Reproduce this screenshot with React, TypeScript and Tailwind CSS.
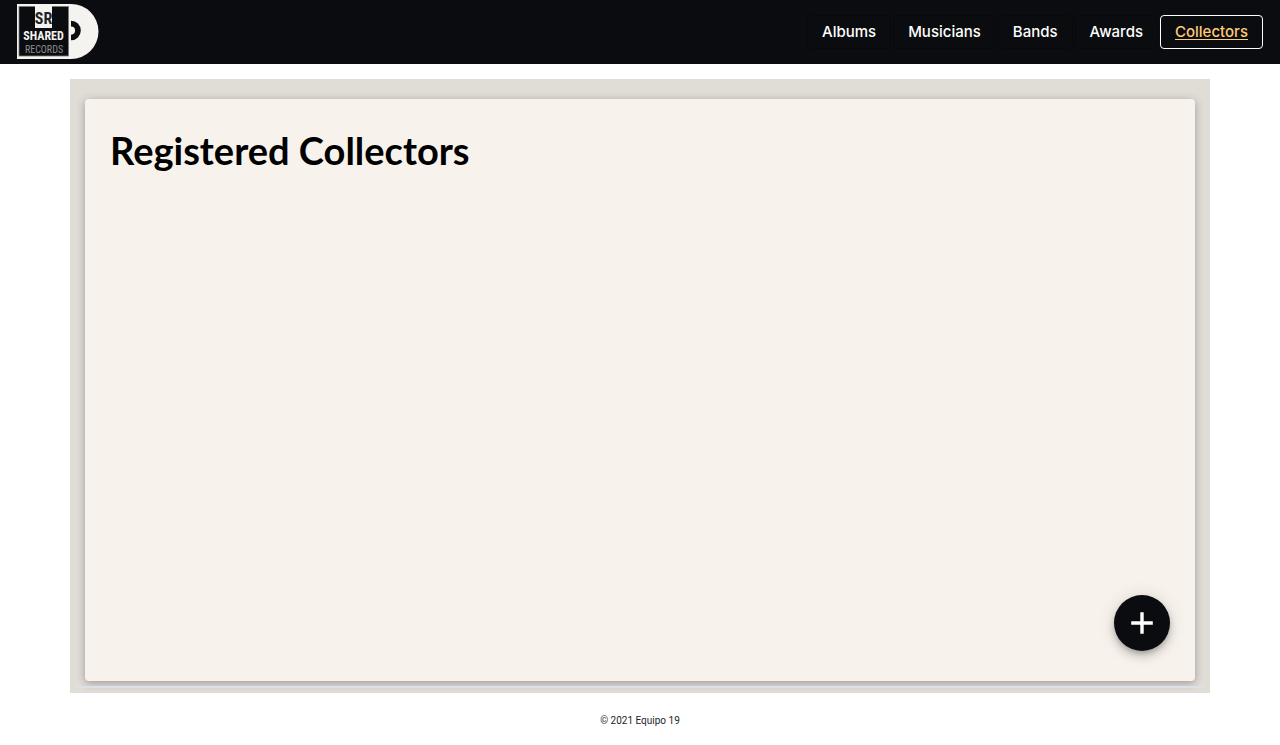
const links = [
  { label: "Albums", href: "#albums" },
  { label: "Musicians", href: "#musicians" },
  { label: "Bands", href: "#bands" },
  { label: "Awards", href: "#awards" },
  { label: "Collectors", href: "#collectors" },
];

function Logo() {
  return (
    <svg
      className="block"
      width="83"
      height="56"
      viewBox="0 0 83 56"
      role="img"
      aria-label="Shared Records"
      fontFamily="'Roboto Condensed', 'Liberation Sans Narrow', sans-serif"
      textAnchor="middle"
    >
      <path d="M1 0H55A27.5 27.5 0 0 1 55 55H1Z" fill="#f4f3ef" />
      <rect x="3" y="2.5" width="49.5" height="49.5" fill="#0b0c10" stroke="#77787a" strokeWidth="0.8" />
      <rect x="19" y="1" width="17" height="23" fill="#f4f3ef" />
      <path d="M55 16.7A9.8 9.8 0 0 1 55 36.3V30.7A4.1 4.1 0 0 0 55 22.5Z" fill="#0b0c10" />
      <text x="27.5" y="20" fontWeight="700" fontSize="16" fill="#222326">SR</text>
      <text x="27.5" y="36" fontWeight="700" fontSize="12" fill="#f4f3ef">SHARED</text>
      <text x="28" y="49" fontSize="10" fill="#8b8c8d">RECORDS</text>
    </svg>
  );
}

export default function App() {
  return (
    <div className="flex min-h-screen flex-col bg-white font-[Roboto,sans-serif]">
      <header className="flex h-16 items-center justify-between bg-[#0b0c10] px-4">
        <a href="#home">
          <Logo />
        </a>
        <nav className="flex items-center font-[Inter,sans-serif] text-[15px] leading-6 font-medium">
          {links.map(({ label, href }) => {
            const active = label === "Collectors";
            return (
              <a
                key={label}
                href={href}
                aria-current={active ? "page" : undefined}
                className={
                  active
                    ? "mx-px rounded-[4px] border border-white px-3.5 py-1 text-[#ffcb77] underline underline-offset-2"
                    : "mx-px rounded-[4px] border border-[#08090c] px-3.5 py-1 text-white"
                }
              >
                {label}
              </a>
            );
          })}
        </nav>
      </header>

      <main className="mx-auto mt-[15px] flex w-full max-w-[1140px] flex-1 flex-col bg-[#e0dcd6] px-[5px] pt-5 pb-[5px]">
        <section className="mx-2.5 flex flex-1 flex-col rounded-[4px] bg-[#f7f2ec] px-[25px] pt-[27px] pb-[30px] shadow-[0_2px_8px_rgba(0,0,0,0.3)]">
          <h1 className="font-[Lato,sans-serif] text-[38px] leading-[48px] font-bold text-black">
            Registered Collectors
          </h1>
          <button
            type="button"
            aria-label="Add collector"
            className="mt-auto flex size-14 items-center justify-center self-end rounded-full bg-[#0b0c10] text-white shadow-[0_3px_5px_-1px_rgba(0,0,0,0.2),0_6px_10px_rgba(0,0,0,0.14),0_1px_18px_rgba(0,0,0,0.12)]"
          >
            <svg className="size-6" viewBox="0 0 24 24" fill="currentColor" aria-hidden="true">
              <path d="M10.3 1.2H13.7V10.3H22.8V13.7H13.7V22.8H10.3V13.7H1.2V10.3H10.3Z" />
            </svg>
          </button>
        </section>
        <hr className="relative mt-[5px] h-0.5 border-0 bg-[#dce0e8]" />
      </main>

      <footer className="flex h-[52px] items-center justify-center pt-1 text-[10px] leading-4 text-[#212529]">
        <p>© 2021 Equipo 19</p>
      </footer>
    </div>
  );
}
